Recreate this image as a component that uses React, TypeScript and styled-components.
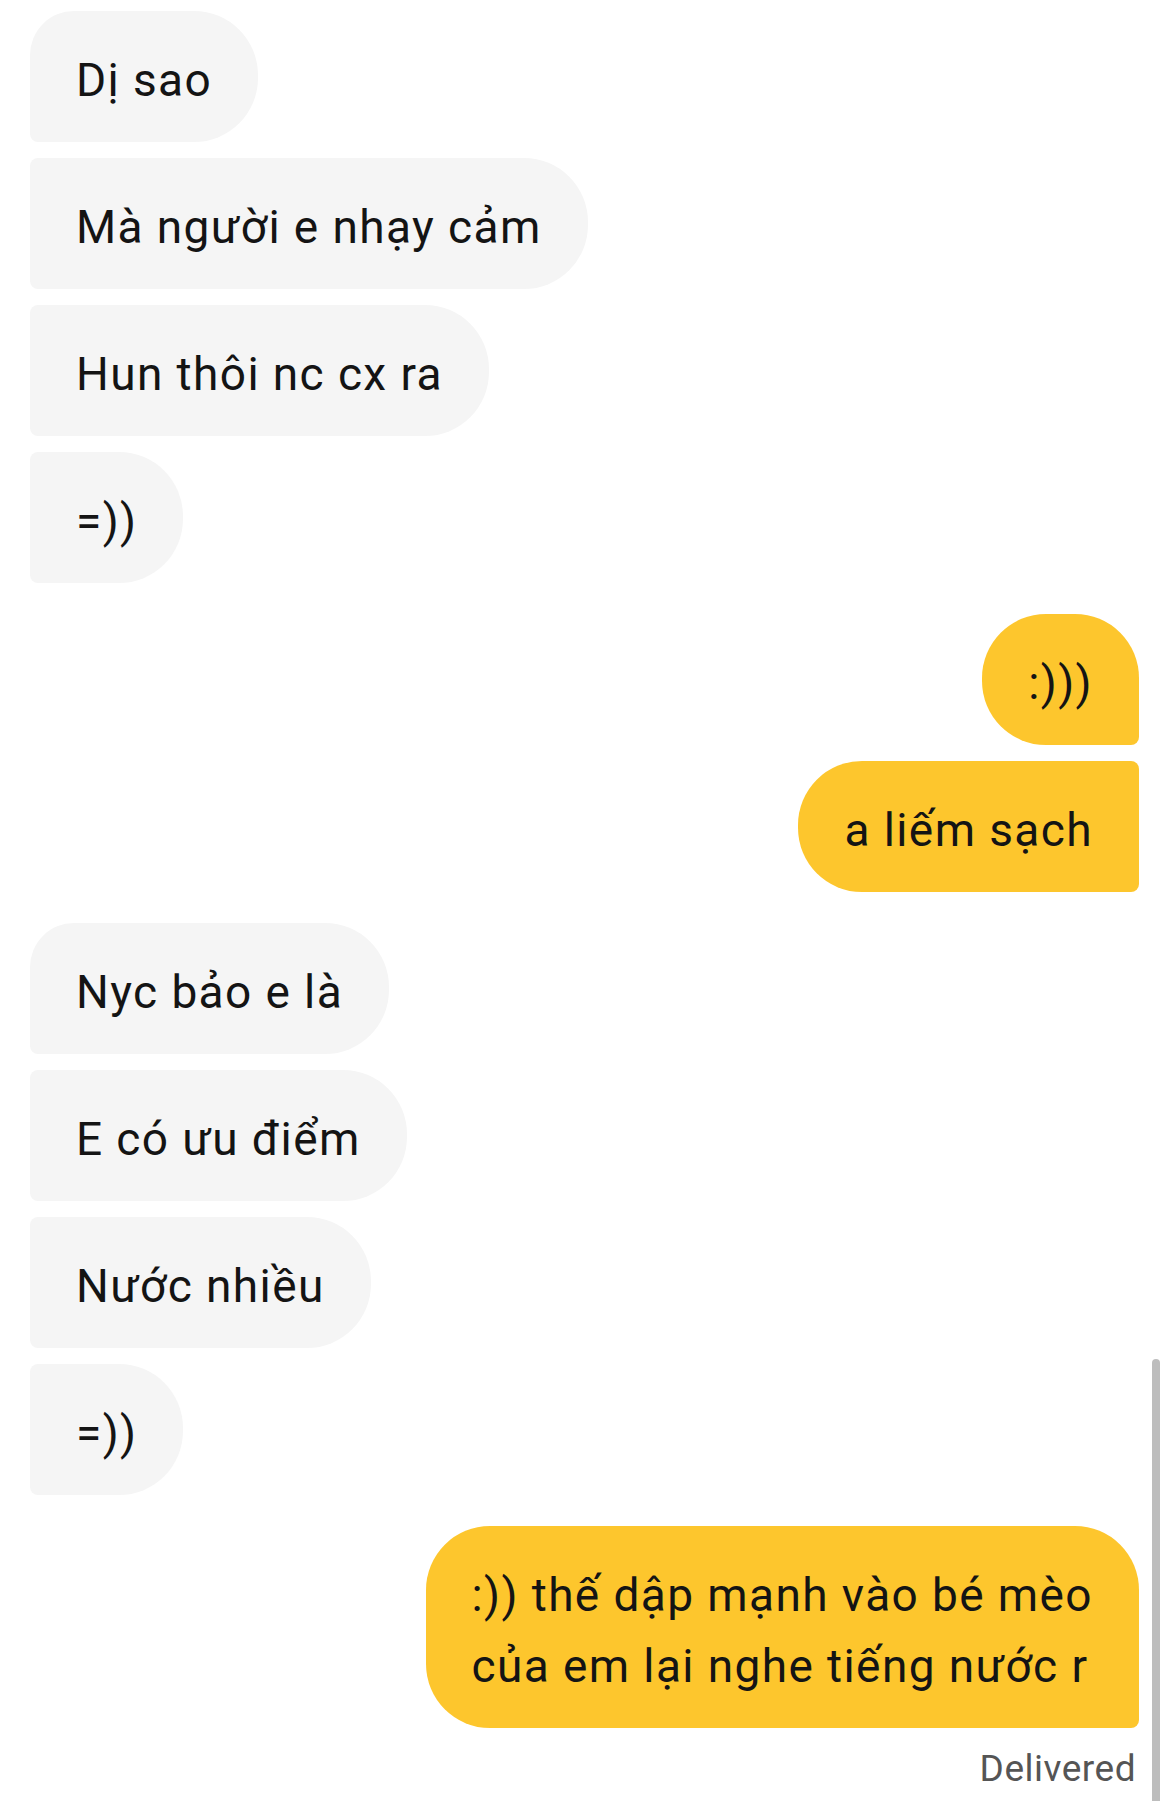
import * as React from "react";
import styled, { createGlobalStyle } from "styled-components";

type Side = "in" | "out";
type Pos = "first" | "middle" | "last";

interface IMessage {
  id: number;
  side: Side;
  pos: Pos;
  text: React.ReactNode;
}

const messages: IMessage[] = [
  { id: 1, side: "in", pos: "first", text: "Dị sao" },
  { id: 2, side: "in", pos: "middle", text: "Mà người e nhạy cảm" },
  { id: 3, side: "in", pos: "middle", text: "Hun thôi nc cx ra" },
  { id: 4, side: "in", pos: "last", text: "=))" },
  { id: 5, side: "out", pos: "first", text: ":)))" },
  { id: 6, side: "out", pos: "last", text: "a liếm sạch" },
  { id: 7, side: "in", pos: "first", text: "Nyc bảo e là" },
  { id: 8, side: "in", pos: "middle", text: "E có ưu điểm" },
  { id: 9, side: "in", pos: "middle", text: "Nước nhiều" },
  { id: 10, side: "in", pos: "last", text: "=))" },
  {
    id: 11,
    side: "out",
    pos: "first",
    text: (
      <>
        :)) thế dập mạnh vào bé mèo
        <br />
        của em lại nghe tiếng nước r
      </>
    ),
  },
];

const GlobalStyle = createGlobalStyle`
  html, body {
    margin: 0;
    padding: 0;
    background: #ffffff;
  }
  body {
    font-family: Roboto, "Noto Sans", sans-serif;
    -webkit-font-smoothing: antialiased;
  }
`;

export default function App() {
  return (
    <>
      <GlobalStyle />
      <Thread>
        {messages.map((m, i) => {
          const prev = messages[i - 1];
          const newGroup = !prev || prev.side !== m.side;
          return (
            <Row key={m.id} $side={m.side} $gap={i === 0 ? 0 : newGroup ? 31 : 16}>
              <Bubble $side={m.side} $pos={m.pos}>
                {m.text}
              </Bubble>
            </Row>
          );
        })}
        <Status>Delivered</Status>
      </Thread>
      <ScrollThumb />
    </>
  );
}

const Thread = styled.main`
  display: flex;
  flex-direction: column;
  padding: 11px 31px 0 30px;
  min-height: 1801px;
  box-sizing: border-box;
`;

const Row = styled.div<{ $side: Side; $gap: number }>`
  display: flex;
  justify-content: ${(p) => (p.$side === "in" ? "flex-start" : "flex-end")};
  margin-top: ${(p) => p.$gap}px;
`;

const BIG = 64;
const SMALL = 8;

const Bubble = styled.div<{ $side: Side; $pos: Pos }>`
  box-sizing: border-box;
  padding: 34px 46px 26px 46px;
  font-size: 46px;
  line-height: 71px;
  letter-spacing: 1.4px;
  color: #141414;
  white-space: nowrap;
  background: ${(p) => (p.$side === "in" ? "#f5f5f5" : "#fdc62d")};
  border-radius: ${(p) =>
    p.$side === "in"
      ? `${p.$pos === "first" ? 44 : SMALL}px ${BIG}px ${BIG}px ${SMALL}px`
      : `${BIG}px ${p.$pos === "first" ? BIG : SMALL}px ${SMALL}px ${BIG}px`};
`;

const Status = styled.div`
  align-self: flex-end;
  margin-top: 18px;
  margin-right: 3px;
  font-size: 37px;
  line-height: 46px;
  letter-spacing: 0.5px;
  color: #555555;
`;

const ScrollThumb = styled.div`
  position: absolute;
  left: 1152px;
  top: 1359px;
  width: 8px;
  height: 442px;
  background: #bdbdbd;
  border-radius: 4px 4px 0 0;
`;
